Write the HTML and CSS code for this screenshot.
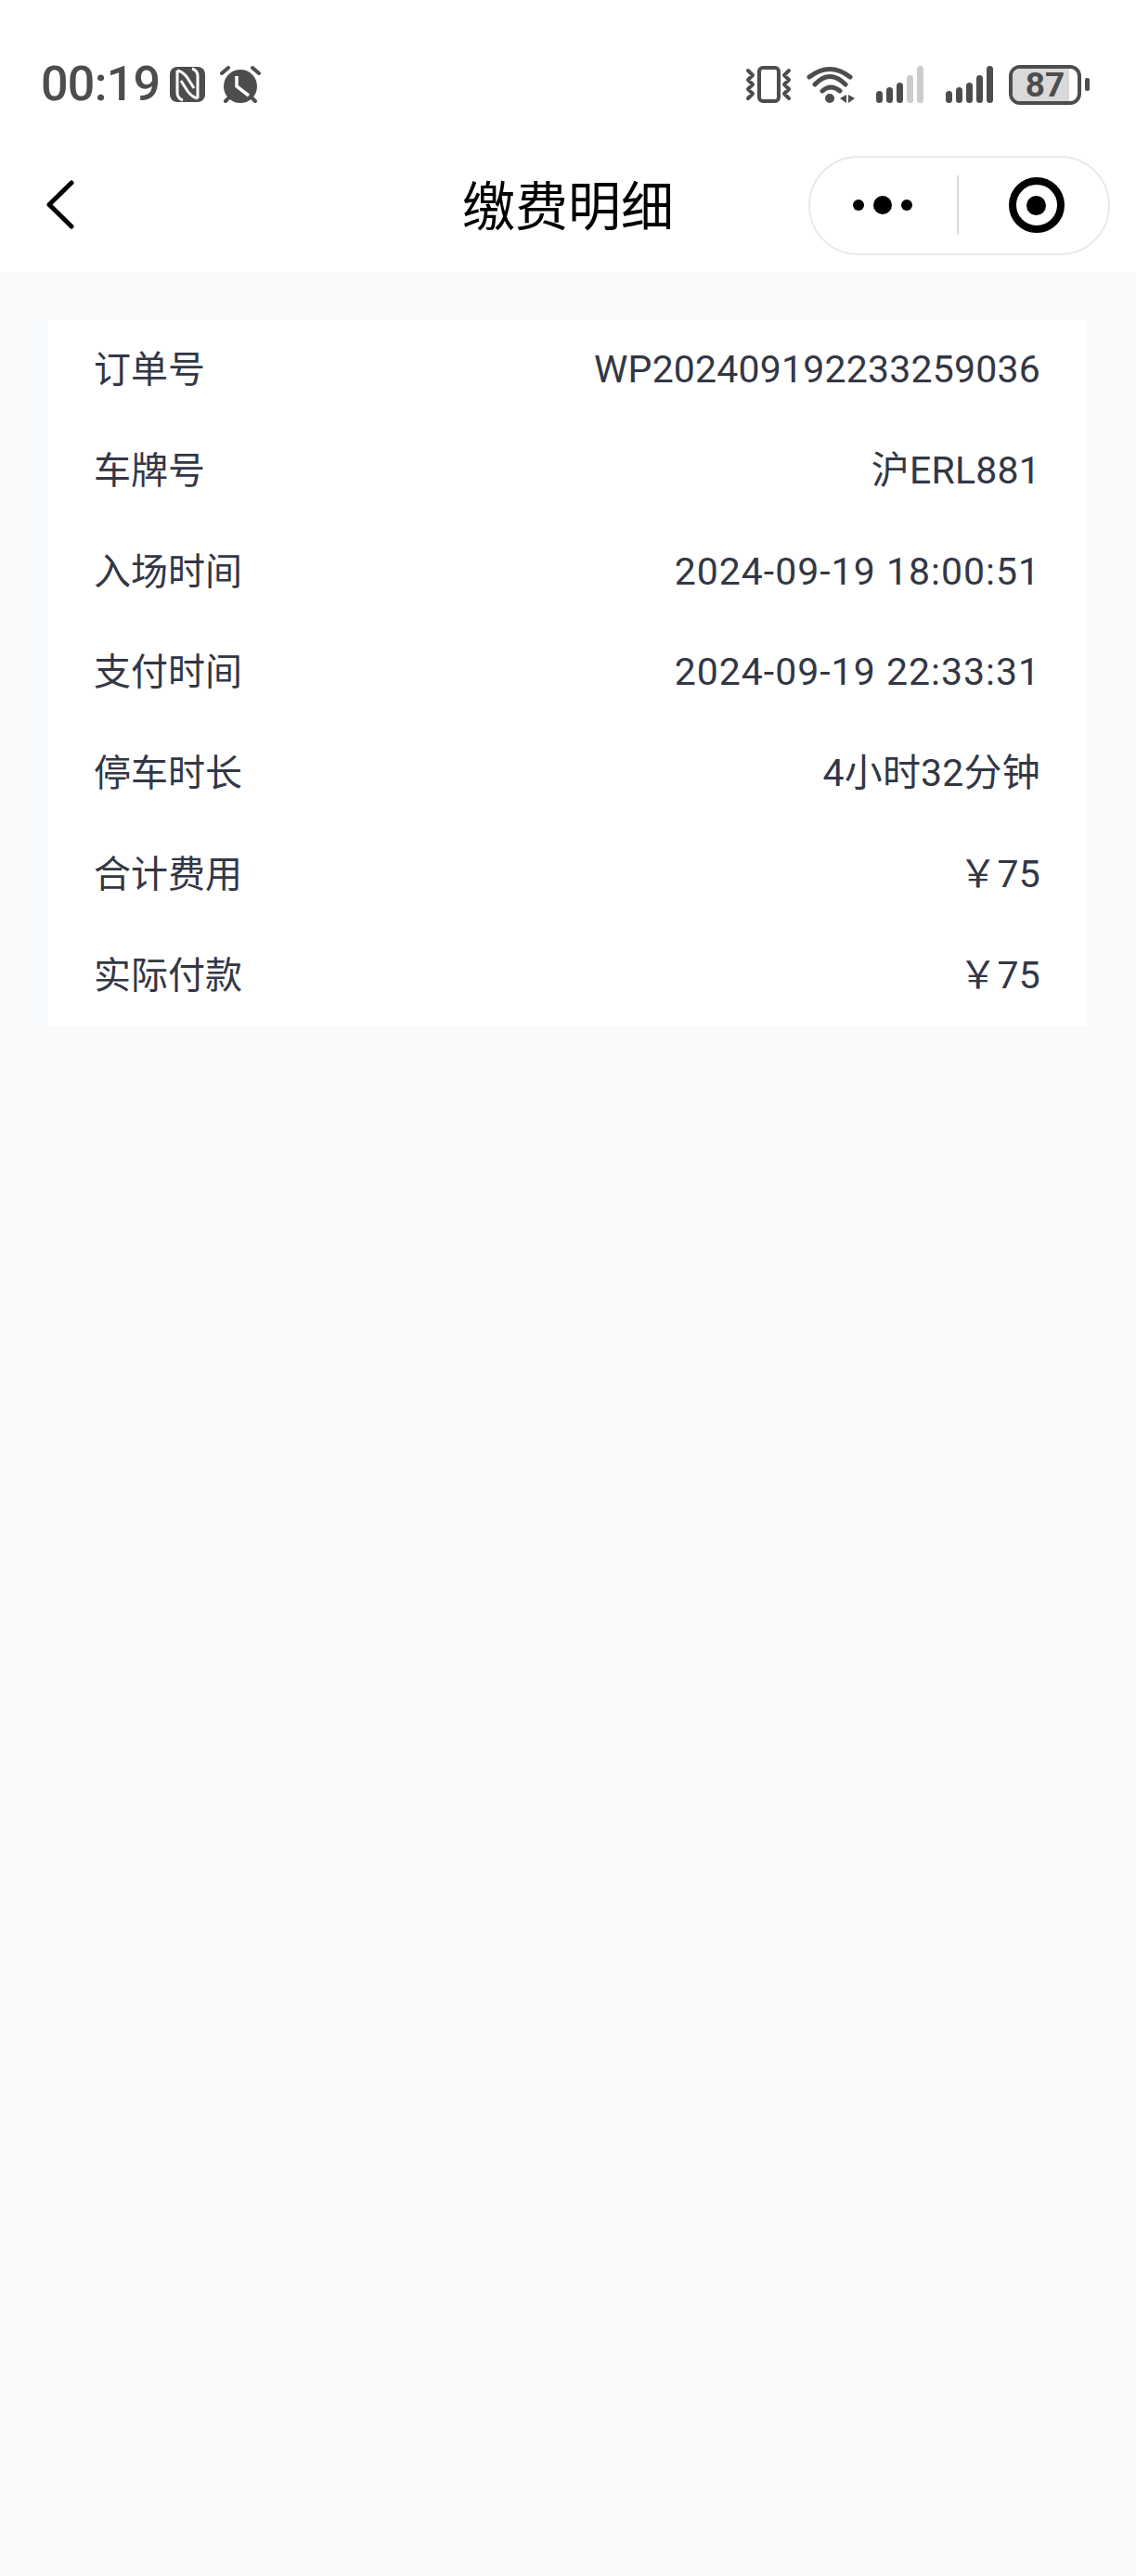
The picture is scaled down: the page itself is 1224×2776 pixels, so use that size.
FILE: index.html
```html
<!DOCTYPE html>
<html lang="zh-CN">
<head>
    <meta charset="UTF-8">
    <meta name="viewport" content="width=device-width, initial-scale=1.0">
    <title>缴费明细</title>
    <link rel="stylesheet" href="styles.css">
</head>
<body>
    <header class="top">
        <div class="status-bar">
            <div class="status-left">
                <span class="clock">00:19</span>
                <svg class="nfc-icon" width="38" height="38" viewBox="0 0 38 38">
                    <rect width="38" height="38" rx="8" fill="#4d4d4d"/>
                    <path d="M8 4 V28 Q8 34 14 36 M8 4 Q14 5 19 12 L26 23 M30 34 V10 Q30 4 24 2 M30 34 Q24 33 19 26 L12 15" fill="none" stroke="#fff" stroke-width="3"/>
                </svg>
                <svg class="alarm-icon" width="44" height="42" viewBox="0 0 44 42">
                    <circle cx="22" cy="23" r="18" fill="#4d4d4d"/>
                    <path d="M2 9 L9 3 M35 3 L42 9 M6 39 L10 35 M38 39 L34 35" stroke="#4d4d4d" stroke-width="4" stroke-linecap="round"/>
                    <path d="M18 12 V23 L31 33" fill="none" stroke="#fff" stroke-width="3.500"/>
                </svg>
            </div>
            <div class="status-right">
                <svg class="vibrate-icon" width="50" height="42" viewBox="0 0 50 42">
                    <rect x="15" y="3" width="21" height="36" rx="4" fill="none" stroke="#4d4d4d" stroke-width="4"/>
                    <path d="M3 6 L8 11 L3 16 L8 21 L3 26 L8 31 L3 36 M47 6 L42 11 L47 16 L42 21 L47 26 L42 31 L47 36" fill="none" stroke="#4d4d4d" stroke-width="4" stroke-linecap="round" stroke-linejoin="round"/>
                </svg>
                <svg class="wifi-icon" width="52" height="42" viewBox="0 0 52 42">
                    <path d="M3 13 Q25 -4 47 13 M9 21 Q25 4 42 21 M17 28 Q26 20 36 28" fill="none" stroke="#4d4d4d" stroke-width="5" stroke-linecap="round"/>
                    <circle cx="25" cy="36" r="5" fill="#4d4d4d"/>
                    <path d="M36 36 L43 32 V41 Z M45 32 V41 L52 36 Z" fill="#4d4d4d"/>
                </svg>
                <svg class="signal-icon" width="52" height="42" viewBox="0 0 52 42">
                    <rect x="0" y="28" width="7" height="13" rx="3.5" fill="#4d4d4d"/>
                    <rect x="11" y="24" width="7" height="17" rx="3.5" fill="#4d4d4d"/>
                    <rect x="22" y="19" width="7" height="22" rx="3.5" fill="#4d4d4d"/>
                    <rect x="33" y="11" width="7" height="30" rx="3.5" fill="#ccc"/>
                    <rect x="44" y="1" width="7" height="40" rx="3.5" fill="#ccc"/>
                </svg>
                <svg class="signal-icon" width="52" height="42" viewBox="0 0 52 42">
                    <rect x="0" y="28" width="7" height="13" rx="3.5" fill="#4d4d4d"/>
                    <rect x="11" y="24" width="7" height="17" rx="3.5" fill="#4d4d4d"/>
                    <rect x="22" y="19" width="7" height="22" rx="3.5" fill="#4d4d4d"/>
                    <rect x="33" y="11" width="7" height="30" rx="3.5" fill="#4d4d4d"/>
                    <rect x="44" y="1" width="7" height="40" rx="3.5" fill="#4d4d4d"/>
                </svg>
                <div class="battery">
                    <div class="battery-body">
                        <div class="battery-fill"></div>
                        <span class="battery-num">87</span>
                    </div>
                    <div class="battery-nub"></div>
                </div>
            </div>
        </div>
        <nav class="nav-bar">
            <svg class="back-icon" width="34" height="54" viewBox="0 0 34 54">
                <path d="M29 3 L5 26.500 L29 50" fill="none" stroke="#000" stroke-width="5" stroke-linecap="round" stroke-linejoin="round"/>
            </svg>
            <h1 class="nav-title">缴费明细</h1>
            <div class="capsule">
                <div class="capsule-more">
                    <span class="dot"></span>
                    <span class="dot dot-big"></span>
                    <span class="dot"></span>
                </div>
                <div class="capsule-line"></div>
                <div class="capsule-target">
                    <span class="target-ring"><span class="target-core"></span></span>
                </div>
            </div>
        </nav>
    </header>

    <main class="content">
        <section class="detail-card">
            <div class="row"><span class="row-label">订单号</span><span class="row-value">WP202409192233259036</span></div>
            <div class="row"><span class="row-label">车牌号</span><span class="row-value">沪ERL881</span></div>
            <div class="row"><span class="row-label">入场时间</span><span class="row-value row-date">2024-09-19 18:00:51</span></div>
            <div class="row"><span class="row-label">支付时间</span><span class="row-value row-date">2024-09-19 22:33:31</span></div>
            <div class="row"><span class="row-label">停车时长</span><span class="row-value">4小时32分钟</span></div>
            <div class="row"><span class="row-label">合计费用</span><span class="row-value">￥75</span></div>
            <div class="row"><span class="row-label">实际付款</span><span class="row-value">￥75</span></div>
        </section>
    </main>
</body>
</html>
```

FILE: styles.css
```css
* {
    box-sizing: border-box;
}

html, body {
    margin: 0;
    padding: 0;
}

body {
    min-height: 2776px;
    background-color: #f8fafc;
    font-family: "Noto Sans CJK SC", sans-serif;
}

.top {
    background-color: #fff;
}

.status-bar {
    height: 148px;
    padding: 69px 50px 0 44px;
    display: flex;
    justify-content: space-between;
    align-items: flex-start;
}

.status-left, .status-right {
    display: flex;
    align-items: center;
    height: 44px;
}

.clock {
    font-family: Roboto, sans-serif;
    font-size: 52px;
    font-weight: 500;
    letter-spacing: -0.7px;
    line-height: 44px;
    color: #4d4d4d;
}

.nfc-icon {
    margin-left: 11px;
}

.alarm-icon {
    margin-left: 16px;
}

.wifi-icon {
    margin-left: 16px;
}

.signal-icon {
    margin-left: 23px;
}

.battery {
    margin-left: 16px;
    display: flex;
    align-items: center;
}

.battery-body {
    position: relative;
    width: 78px;
    height: 43px;
    border: 4px solid #4d4d4d;
    border-radius: 12px;
    display: flex;
    align-items: center;
    justify-content: center;
    overflow: hidden;
}

.battery-fill {
    position: absolute;
    left: 0;
    top: 0;
    bottom: 0;
    width: 87%;
    background-color: #d9d9d9;
}

.battery-num {
    position: relative;
    font-family: Roboto, sans-serif;
    font-size: 37px;
    font-weight: 700;
    color: #4d4d4d;
}

.battery-nub {
    width: 5px;
    height: 14px;
    margin-left: 4px;
    border-radius: 2px;
    background-color: #4d4d4d;
}

.nav-bar {
    height: 146px;
    padding: 0 28px 6px;
    display: grid;
    grid-template-columns: 1fr auto 1fr;
    align-items: center;
}

.back-icon {
    margin-left: 20px;
    margin-top: 6px;
}

.nav-title {
    margin: 0;
    font-size: 57px;
    font-weight: 400;
    color: #000;
}

.capsule {
    justify-self: end;
    width: 325px;
    height: 107px;
    margin-top: 6px;
    border: 2px solid #e8e8e8;
    border-radius: 54px;
    display: flex;
    align-items: center;
}

.capsule-more {
    flex: 1;
    padding-right: 3px;
    display: flex;
    align-items: center;
    justify-content: center;
    gap: 10px;
}

.dot {
    width: 12px;
    height: 12px;
    border-radius: 50%;
    background-color: #000;
}

.dot-big {
    width: 20px;
    height: 20px;
}

.capsule-line {
    width: 2px;
    height: 64px;
    background-color: #ddd;
}

.capsule-target {
    flex: 1;
    padding-left: 6px;
    display: flex;
    justify-content: center;
}

.target-ring {
    width: 60px;
    height: 60px;
    border: 8px solid #000;
    border-radius: 50%;
    display: flex;
    align-items: center;
    justify-content: center;
}

.target-core {
    width: 21px;
    height: 21px;
    border-radius: 50%;
    background-color: #000;
}

.content {
    padding: 51px 53px 0 51px;
}

.detail-card {
    height: 760.6px;
    padding: 0 50px;
    background-color: #fff;
}

.row {
    height: 108.8px;
    padding-top: 30px;
    display: flex;
    align-items: baseline;
    justify-content: space-between;
    font-size: 40px;
    line-height: 40px;
    color: #333745;
}

.row-value {
    font-family: Roboto, "Noto Sans CJK SC", sans-serif;
    font-size: 41px;
    letter-spacing: 0.2px;
}

.row-date {
    letter-spacing: 1px;
}
```
